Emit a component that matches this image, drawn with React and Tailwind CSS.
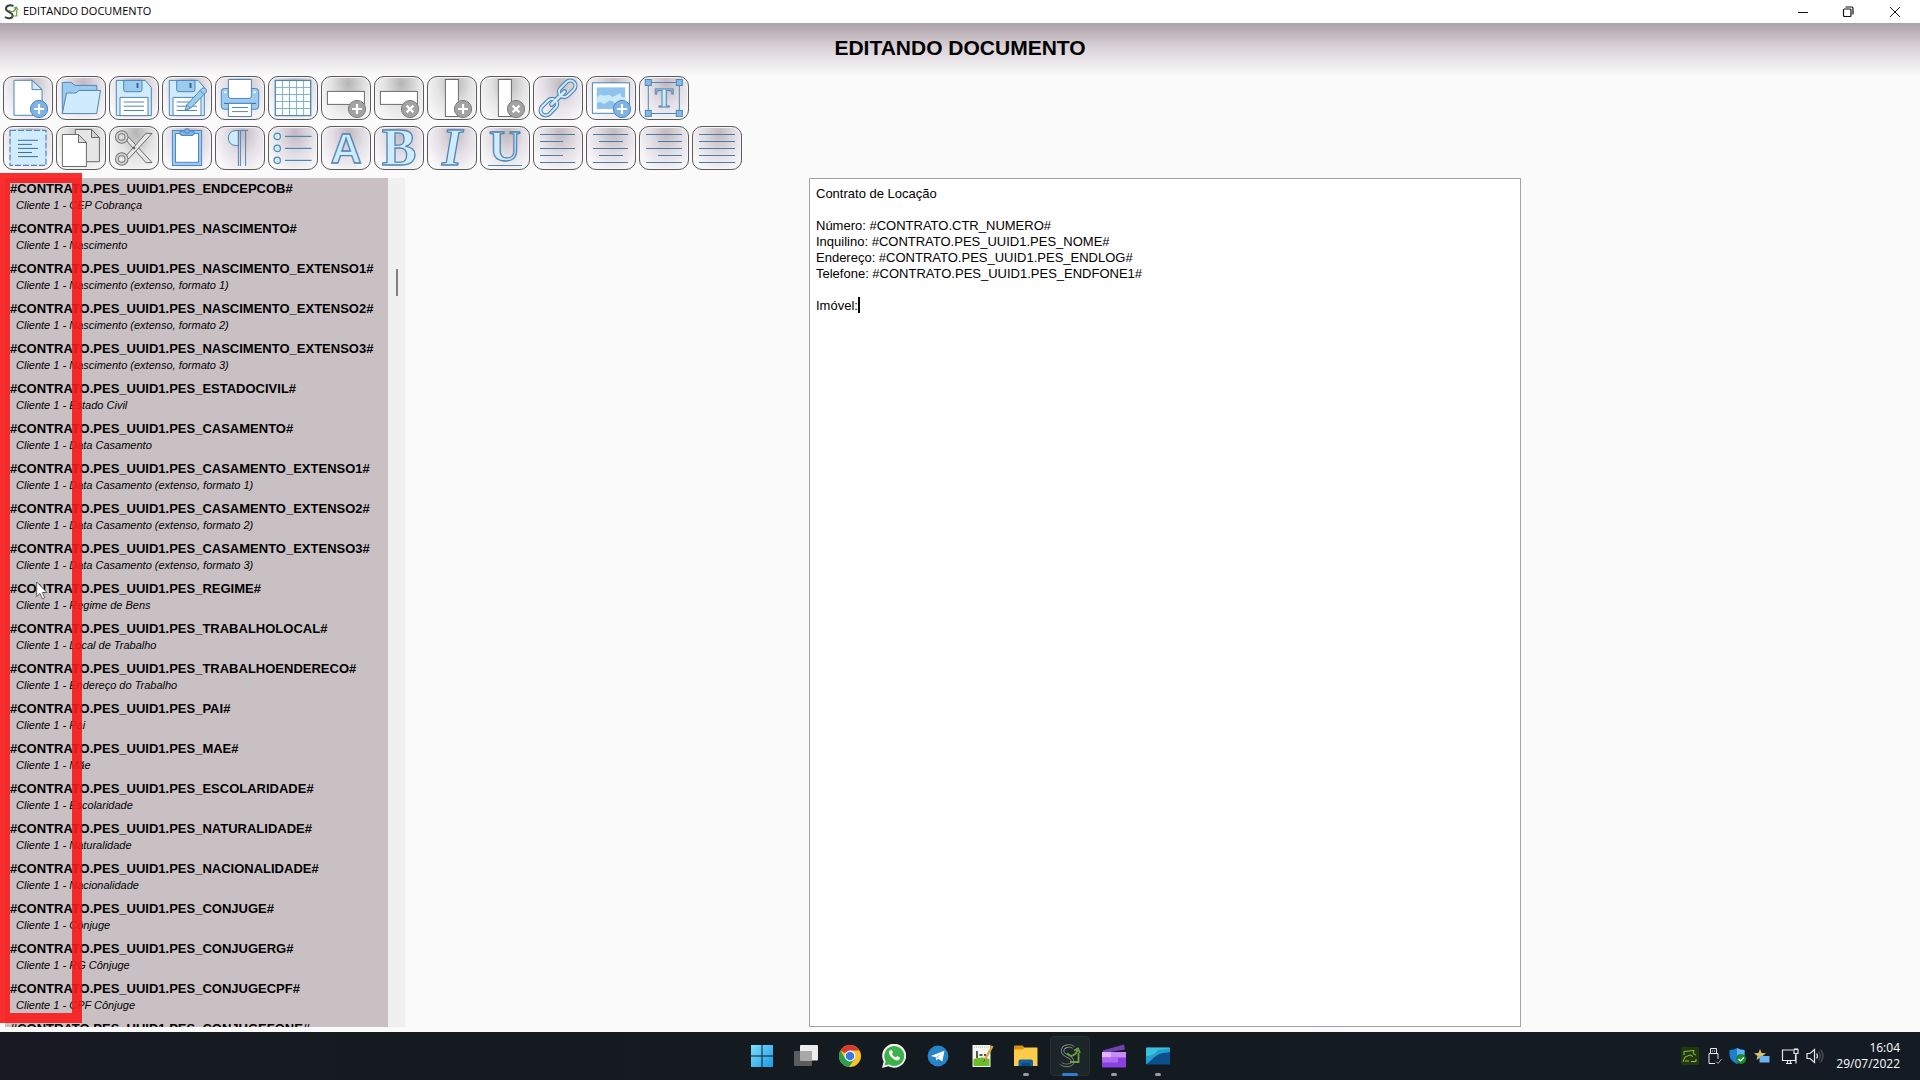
import React, { useState } from "react";

const BLUE = "#4f86b3";
const LIGHT = "#cfebfc";
const MID = "#9ccbf0";
const GRAY = "#6b6b6b";

const fields = [
  ["ENDCEPCOB", "CEP Cobrança"],
  ["NASCIMENTO", "Nascimento"],
  ["NASCIMENTO_EXTENSO1", "Nascimento (extenso, formato 1)"],
  ["NASCIMENTO_EXTENSO2", "Nascimento (extenso, formato 2)"],
  ["NASCIMENTO_EXTENSO3", "Nascimento (extenso, formato 3)"],
  ["ESTADOCIVIL", "Estado Civil"],
  ["CASAMENTO", "Data Casamento"],
  ["CASAMENTO_EXTENSO1", "Data Casamento (extenso, formato 1)"],
  ["CASAMENTO_EXTENSO2", "Data Casamento (extenso, formato 2)"],
  ["CASAMENTO_EXTENSO3", "Data Casamento (extenso, formato 3)"],
  ["REGIME", "Regime de Bens"],
  ["TRABALHOLOCAL", "Local de Trabalho"],
  ["TRABALHOENDERECO", "Endereço do Trabalho"],
  ["PAI", "Pai"],
  ["MAE", "Mãe"],
  ["ESCOLARIDADE", "Escolaridade"],
  ["NATURALIDADE", "Naturalidade"],
  ["NACIONALIDADE", "Nacionalidade"],
  ["CONJUGE", "Cônjuge"],
  ["CONJUGERG", "RG Cônjuge"],
  ["CONJUGECPF", "CPF Cônjuge"],
  ["CONJUGEFONE", "Telefone Cônjuge"],
];

const initialText = `Contrato de Locação

Número: #CONTRATO.CTR_NUMERO#
Inquilino: #CONTRATO.PES_UUID1.PES_NOME#
Endereço: #CONTRATO.PES_UUID1.PES_ENDLOG#
Telefone: #CONTRATO.PES_UUID1.PES_ENDFONE1#

Imóvel:`;

const Badge = ({ remove, gray }) => (
  <>
    <circle
      cx="36"
      cy="33"
      r="8.6"
      fill={gray ? "#a3a3a3" : "#7fb2e5"}
      stroke={gray ? "#7d7d7d" : "#4a86c0"}
    />
    <path
      d={remove ? "M32.6 29.6l6.8 6.8M39.4 29.6l-6.8 6.8" : "M36 28v10M31 33h10"}
      stroke="#fff"
      strokeWidth="2.2"
    />
  </>
);

const Floppy = () => (
  <g stroke={BLUE}>
    <path d="M7.3 4.4H36L42.3 11.3V39.6H7.3Z" fill={LIGHT} />
    <path d="M14.7 4.4H33V13.5Q33 15.7 31 15.7H16.7Q14.7 15.7 14.7 13.5Z" fill={MID} />
    <path d="M28.5 7v5" stroke="#356a96" strokeWidth="2" />
    <path d="M11 39.6V21.4H39V39.6Z" fill="#fff" />
    <path d="M14.7 26H35M14.7 30.2H35M14.7 34.5H35" />
  </g>
);

const Lines = ({ rows }) => (
  <path
    d={rows.map(([a, b], i) => `M${a} ${8.5 + i * 7}H${b}`).join("")}
    stroke="#4c7ba3"
    strokeWidth="1.2"
  />
);

const Letter = ({ children, x = 25, y = 38, size = 50, ...rest }) => (
  <text
    x={x}
    y={y}
    fontSize={size}
    textAnchor="middle"
    fontFamily="'Liberation Serif', serif"
    fill={LIGHT}
    stroke={BLUE}
    strokeWidth="1.3"
    {...rest}
  >
    {children}
  </text>
);

const topTools = [
  {
    label: "Novo",
    icon: (
      <>
        <g stroke={BLUE} fill="#fff">
          <path d="M11 4.3H29L39 13.6V39.3H11Z" />
          <path d="M29 4.3V13.6H39Z" fill={LIGHT} />
        </g>
        <Badge />
      </>
    ),
  },
  {
    label: "Abrir",
    icon: (
      <g stroke={BLUE}>
        <path d="M6.3 37.6V6.4H15L19 9.4H40.8V30Z" fill={MID} />
        <path d="M6.3 37.6L10.5 17H20L23 14.4H44.5L40.7 37.6Z" fill={LIGHT} />
      </g>
    ),
  },
  { label: "Salvar", icon: <Floppy /> },
  {
    label: "Salvar como",
    icon: (
      <>
        <Floppy />
        <path d="M23 34.3L25 28.6 40 12.4Q42 11 43.6 12.6T44 16.4L28.6 32.2Z" fill={MID} stroke={BLUE} />
        <path d="M25 28.6L28.6 32.2M38 14.5L42 18.6" stroke={BLUE} />
      </>
    ),
  },
  {
    label: "Imprimir",
    icon: (
      <g stroke={BLUE}>
        <rect x="6.3" y="12.5" width="37.4" height="20.8" rx="3" fill={MID} />
        <path d="M13.4 3.5H36.4V20Q36.4 22.4 34 22.4H15.8Q13.4 22.4 13.4 20Z" fill="#fff" />
        <path d="M9 27.4H41" stroke="#356a96" />
        <path d="M13.4 27.4H36.4V40.5H13.4Z" fill="#fff" />
        <path d="M17 31.5H33M17 35.6H33" />
        <path d="M9 16.3h2.4M38.5 16.3h2.4" stroke="#fff" strokeWidth="1.4" />
      </g>
    ),
  },
  {
    label: "Tabela",
    icon: (
      <>
        <rect x="7.3" y="4.4" width="35.4" height="35.2" fill="#fff" stroke={BLUE} strokeWidth="1.3" />
        <path
          d="M14.4 5V39M21.5 5V39M28.6 5V39M35.6 5V39M8 11.4H42M8 18.5H42M8 25.5H42M8 32.5H42"
          stroke="#7eb0cf"
        />
      </>
    ),
  },
  {
    label: "Inserir linha",
    gray: true,
    icon: (
      <>
        <rect x="6.4" y="15.4" width="37" height="13" fill="#fff" stroke={GRAY} />
        <Badge gray />
      </>
    ),
  },
  {
    label: "Remover linha",
    gray: true,
    icon: (
      <>
        <rect x="6.4" y="15.4" width="37" height="13" fill="#fff" stroke={GRAY} />
        <Badge gray remove />
      </>
    ),
  },
  {
    label: "Inserir coluna",
    gray: true,
    icon: (
      <>
        <rect x="18.4" y="3.5" width="13" height="37" fill="#fff" stroke={GRAY} />
        <Badge gray />
      </>
    ),
  },
  {
    label: "Remover coluna",
    gray: true,
    icon: (
      <>
        <rect x="18.4" y="3.5" width="13" height="37" fill="#fff" stroke={GRAY} />
        <Badge gray remove />
      </>
    ),
  },
  {
    label: "Link",
    icon: (
      <g transform="rotate(-45 25 22)" fill="none">
        {[BLUE, LIGHT].map((c) => (
          <g key={c} stroke={c} strokeWidth={c === BLUE ? 4.2 : 2}>
            <rect x="2.5" y="16.8" width="19" height="10.4" rx="5.2" />
            <rect x="28.5" y="16.8" width="19" height="10.4" rx="5.2" />
            <path d="M16 22H34" strokeLinecap="round" strokeWidth={c === BLUE ? 5 : 2.8} />
          </g>
        ))}
      </g>
    ),
  },
  {
    label: "Imagem",
    icon: (
      <>
        <rect x="6.4" y="6.8" width="37" height="30.5" fill="#fff" stroke={BLUE} />
        <rect x="10.8" y="11.4" width="28.4" height="21.6" fill="#8fc3ee" />
        <path d="M10.8 22q2-4 5-3t5 0 4 1 6-1 4 0 4.400 2v7q-3-3-6-1t-6-1-6 0-5 1-5.400 0z" fill="#c9e9fb" />
        <Badge />
      </>
    ),
  },
  {
    label: "Caixa de texto",
    icon: (
      <>
        <rect x="9.3" y="6.5" width="31" height="31" fill="none" stroke={BLUE} />
        {[
          [6.3, 3.5],
          [37.3, 3.5],
          [6.3, 34.4],
          [37.3, 34.4],
        ].map(([x, y]) => (
          <rect key={`${x}-${y}`} x={x} y={y} width="6" height="6" fill="#83bbe8" stroke={BLUE} />
        ))}
        <Letter y={31} size={28} fontWeight="bold" strokeWidth="1">
          T
        </Letter>
      </>
    ),
  },
];

const bottomTools = [
  {
    label: "Selecionar tudo",
    icon: (
      <>
        <rect x="7" y="4.4" width="36" height="35" fill={LIGHT} stroke={BLUE} strokeWidth="1.2" strokeDasharray="6 2" />
        <path d="M15 14.3H35M15 18.4H29M15 22.4H35M15 26.5H29M15 30.6H35" stroke="#3f7096" />
      </>
    ),
  },
  {
    label: "Copiar",
    gray: true,
    icon: (
      <g stroke={GRAY}>
        <path d="M19.4 3.5H35.5L43.4 11.5V35.7H19.4Z" fill="#e6e6e6" />
        <path d="M35.5 3.5V11.5H43.4Z" fill="#d0d0d0" />
        <path d="M6.4 8.5H22.5L30.4 16.5V40.5H6.4Z" fill="#fff" />
        <path d="M22.5 8.5V16.5H30.4Z" fill="#ddd" />
      </g>
    ),
  },
  {
    label: "Recortar",
    gray: true,
    icon: (
      <g stroke={GRAY} fill="#e6e6e6">
        <path d="M16.5 13.5L37 36.7 43 36.5 19.5 11Z" />
        <path d="M16.5 30.5L37 7.3 43 7.5 19.5 33Z" />
        <g fill="none">
          <circle cx="12.7" cy="11" r="4.8" stroke="#777" strokeWidth="4" />
          <circle cx="12.7" cy="33" r="4.8" stroke="#777" strokeWidth="4" />
          <circle cx="12.7" cy="11" r="4.8" stroke="#d2d2d2" strokeWidth="2" />
          <circle cx="12.7" cy="33" r="4.8" stroke="#d2d2d2" strokeWidth="2" />
        </g>
        <circle cx="25" cy="22" r="1" fill="#555" />
      </g>
    ),
  },
  {
    label: "Colar",
    icon: (
      <g stroke="#4f86bd">
        <rect x="10.4" y="4.5" width="29.2" height="35" fill="#9ccaf0" />
        <rect x="13.5" y="7.5" width="23" height="28.8" fill="#fff" />
        <path d="M18 5H32V7.5Q32 9.5 30 9.5H20Q18 9.5 18 7.5Z" fill="#7fb2e5" />
        <circle cx="25" cy="5" r="2.4" fill="#7fb2e5" />
      </g>
    ),
  },
  {
    label: "Parágrafo",
    icon: (
      <g stroke={BLUE}>
        <path d="M23.4 4.5H21Q13.4 5 13.4 12T21 19.6H23.4Z" fill={LIGHT} />
        <path d="M23.4 40V4.5H25.4V40M30.6 40V4.5H23.4M30.6 4.5H33" fill="none" />
      </g>
    ),
  },
  {
    label: "Lista",
    icon: (
      <g stroke={BLUE} strokeWidth="1.2">
        {[10.4, 22.4, 34.4].map((y) => (
          <g key={y}>
            <circle cx="9.2" cy={y} r="3.2" fill={LIGHT} />
            <path d={`M17 ${y}H43.6`} />
          </g>
        ))}
      </g>
    ),
  },
  {
    label: "Fonte",
    icon: (
      <Letter y={37} size={43} fontFamily="'Liberation Sans', sans-serif" fontWeight="bold">
        A
      </Letter>
    ),
  },
  { label: "Negrito", icon: <Letter y={39} size={52} fontWeight="bold">B</Letter> },
  { label: "Itálico", icon: <Letter y={39} size={52} fontWeight="bold" fontStyle="italic">I</Letter> },
  {
    label: "Sublinhado",
    icon: (
      <>
        <Letter y={35} size={44} fontWeight="bold">
          U
        </Letter>
        <path d="M8 39.5H42" stroke={BLUE} strokeWidth="1.2" />
      </>
    ),
  },
  { label: "Alinhar à esquerda", icon: <Lines rows={[[7, 42], [7, 30], [7, 42], [7, 30], [7, 42]]} /> },
  { label: "Centralizar", icon: <Lines rows={[[7, 42], [13, 37], [7, 42], [13, 37], [7, 42]]} /> },
  { label: "Alinhar à direita", icon: <Lines rows={[[7, 43], [19, 43], [7, 43], [19, 43], [7, 43]]} /> },
  { label: "Justificar", icon: <Lines rows={[[7, 43], [7, 43], [7, 43], [7, 43], [7, 43]]} /> },
];

const ToolButton = ({ label, icon, gray }) => (
  <button
    type="button"
    aria-label={label}
    className={`w-[50px] h-11 rounded-[10px] border border-[#5c5a5c] shadow-[inset_0_0_0_1px_#f5f5f5] ${
      gray
        ? "bg-[radial-gradient(ellipse_at_55%_15%,#b4b4b4,#e3e3e3_45%,#f8f8f8_85%)]"
        : "bg-[radial-gradient(ellipse_at_55%_15%,#c2b8c0,#e4e0e6_45%,#faf9fb_85%)]"
    }`}
  >
    <svg viewBox="1 1 48 42" className="w-full h-full overflow-visible" fill="none">
      {icon}
    </svg>
  </button>
);

const Logo = ({ className, dark }) => (
  <svg viewBox="0 0 24 24" className={className} fill="none">
    <path
      d="M15.5 3.5C12 .5 4.5 2 4.5 7S14 12 14.5 17 7 22.5 3 19.5"
      stroke={dark ? "#8a8f8c" : "#3b3f3b"}
      strokeWidth={dark ? 3.4 : 3}
    />
    {dark && (
      <path
        d="M15.5 3.5C12 .5 4.5 2 4.5 7S14 12 14.5 17 7 22.5 3 19.5"
        stroke="#1c2526"
        strokeWidth="1.8"
      />
    )}
    <path d="M9 9.5L13 12Q18 11 19.5 6M16 6.5L20 4.5 22 9M20.5 9V18H12" stroke="#6aa043" strokeWidth="1.8" />
  </svg>
);

const taskIcons = [
  {
    label: "Iniciar",
    icon: (
      <g fill="url(#win)">
        <path d="M1 1h10.5v10.5H1zM12.5 1H23v10.5H12.5zM1 12.5h10.5V23H1zM12.5 12.5H23V23H12.5z" />
        <defs>
          <linearGradient id="win" x1="0" y1="0" x2="1" y2="1">
            <stop stopColor="#7fe0fb" />
            <stop offset="1" stopColor="#1899e6" />
          </linearGradient>
        </defs>
      </g>
    ),
  },
  {
    label: "Visão de tarefas",
    icon: (
      <>
        <rect x="0" y="7" width="18" height="15" rx="1" fill="#5a5c5e" />
        <rect x="6" y="1" width="18" height="15.5" rx="1" fill="#ececec" />
        <rect x="6" y="7" width="12" height="9.5" fill="#a8a8a8" />
      </>
    ),
  },
  {
    label: "Chrome",
    icon: (
      <>
        <circle cx="12" cy="12" r="11" fill="#f9c32b" />
        <path d="M12 12L2.5 6.5A11 11 0 0 1 21.5 6.5H12Z" fill="#d93a2f" />
        <path d="M2.5 6.5A11 11 0 0 0 11 23L16.7 14.7 7.3 14.7Z" fill="#2f9e4f" />
        <circle cx="12" cy="12" r="5.4" fill="#fff" />
        <circle cx="12" cy="12" r="4.3" fill="#3b78e7" />
      </>
    ),
  },
  {
    label: "WhatsApp",
    icon: (
      <>
        <path d="M0 24L1.7 17.6A12 12 0 1 1 6.3 22.2Z" fill="#f4f4f4" />
        <path d="M2.5 21.5L3.7 17.2A10 10 0 1 1 7 20.5Z" fill="#3cb04a" />
        <path d="M8.3 6.3c-2 1-2 4 1.5 7.2s6.7 4 8 1.2c.3-.8 0-1.3-.4-1.5l-2-1c-.7-.3-1.3 1.2-1.900 1.100-1-.2-3.400-2.400-3.500-3.300 0-.5 1-1 .8-1.700l-.9-2.100z" fill="#fff" />
      </>
    ),
  },
  {
    label: "Telegram",
    icon: (
      <>
        <circle cx="12" cy="12" r="10.4" fill="#2684c9" />
        <path d="M4.8 12L18.5 6.8 16.3 17.5 12.3 14.7 10.2 16.5 9.8 13.2Z" fill="#fff" />
        <path d="M9.8 13.2L16 8.8 11 14.2Z" fill="#9cc6e6" />
      </>
    ),
  },
  {
    label: "Notepad++",
    icon: (
      <>
        <path d="M2.5 1H20.5V23H2.5Z" fill="#f3f5ee" />
        <path d="M3.5 15Q12 12 19.5 15V22H3.5Z" fill="#6bbd2c" />
        <path d="M7 7v7M9.5 11h3M14 11h2" stroke="#222" strokeWidth="1.5" />
        <path d="M4 3h15" stroke="#aaa" strokeDasharray="1 1" />
        <path d="M22.5 2L14 17" stroke="#d9a73a" strokeWidth="2.4" />
        <path d="M15 15.2L13.5 18" stroke="#444" />
      </>
    ),
  },
  {
    label: "Explorador",
    dot: true,
    icon: (
      <>
        <path d="M0 2.5Q0 1.5 1 1.5H8.5L11 4V7H0Z" fill="#d99312" />
        <path d="M0 5.5H8.5L11 3.5H23.5V22H0Z" fill="#fbcb4a" />
        <path d="M4.5 22V17.5Q4.5 15.5 6.5 15.5H17Q19 15.5 19 17.5V22Z" fill="#135f9f" />
        <path d="M7.5 22V19H16V22Z" fill="#0b4a82" />
      </>
    ),
  },
  { label: "Editor", active: true },
  {
    label: "Clipchamp",
    dot: true,
    icon: (
      <>
        <path d="M.5 6.5L22 .5 23 5.500 2 9Z" fill="#7440b8" />
        <rect x="0" y="8" width="24" height="15.5" rx="1" fill="#8b3fe0" />
        <rect x="0" y="8" width="24" height="5.5" fill="#c58cf5" />
        <path d="M0 8H9V13.5H0Z" fill="#e2b2fb" />
        <path d="M0 13.5H16V18.5H0Z" fill="#b06bf0" />
      </>
    ),
  },
  {
    label: "Área de trabalho",
    dot: true,
    icon: (
      <>
        <rect x="0" y="3.5" width="24" height="17" rx="1" fill="#0b4f8c" />
        <path d="M0 4.5Q0 3.5 1 3.5H23Q24 3.5 24 4.5V8Q13 8 7 14T0 20Z" fill="#38c3de" />
        <path d="M0 12Q8 12 12 6L24 4.5V8Q13 8 7 14T0 20Z" fill="#1b8fc8" opacity=".7" />
      </>
    ),
  },
];

const TaskButton = ({ label, icon, active, dot }) => (
  <button
    type="button"
    aria-label={label}
    className="w-11 h-12 flex items-center justify-center relative"
  >
    {active ? (
      <span className="w-10 h-10 rounded flex items-center justify-center bg-[#1c2629] border border-[#263033]">
        <Logo dark className="w-6 h-6" />
      </span>
    ) : (
      <svg viewBox="0 0 24 24" className="w-6 h-6">
        {icon}
      </svg>
    )}
    {active && <span className="absolute bottom-1 w-4 h-[3px] rounded-full bg-[#2f7fd0]"></span>}
    {dot && <span className="absolute bottom-1 w-1.5 h-[3px] rounded-full bg-[#9a9c9e]"></span>}
  </button>
);

const Tray = () => (
  <div className="flex items-center gap-[7px] text-white">
    <svg viewBox="0 0 18 18" className="w-[18px] h-[18px]" fill="none">
      <rect width="18" height="18" fill="#22380f" />
      <path d="M3 8V4.500L13 3.500 12 6.500 15 8M2 15L4 10 9 8 12 9.500M4 14H8M10 14.500H15V12" stroke="#8fc04a" />
    </svg>
    <svg viewBox="0 0 16 18" className="w-4 h-[18px]" fill="none" stroke="#e8e8e8">
      <path d="M4.5 6V1.5H10.5V6M3 6.500H12V12M3 6.500V16.500H9M6.500 3.500v1M8.500 3.500v1" />
      <path d="M10 14.5L12 16.5 15.5 12" stroke="#aaa" />
    </svg>
    <svg viewBox="0 0 18 18" className="w-[18px] h-[18px]" fill="none">
      <path d="M8 1Q11 3 15.5 3V8Q15 14 8 17 1 14 .5 8V3Q5 3 8 1Z" fill="#1e7fd0" />
      <path d="M8 1Q11 3 15.5 3V8H8Z" fill="#5db4f0" />
      <circle cx="12" cy="12" r="5" fill="#1c8a32" />
      <path d="M9.5 12l2 2 3.3-3.5" stroke="#fff" strokeWidth="1.2" />
    </svg>
    <svg viewBox="0 0 16 16" className="w-4 h-4">
      <path d="M6 1L7.5 5 12 5.3 8.5 8 9.5 12 6 9.7 2.5 12 3.5 8 0 5.3 4.5 5Z" fill="#d9bf6b" />
      <rect x="5.5" y="8" width="10" height="6.5" fill="#6cb4ee" />
    </svg>
    <svg viewBox="0 0 18 18" className="w-[18px] h-[18px] ml-1" fill="none" stroke="#e8e8e8" strokeWidth="1.2">
      <path d="M12 3H1.5V13.5H14.5V8M5 16.5H11M6.5 14v2M9.5 14v2" />
      <path d="M13 2.5H17V6.5H13ZM15 6.5V16.5M14 1v1.5M16 1v1.5" />
    </svg>
    <svg viewBox="0 0 18 18" className="w-[18px] h-[18px]" fill="none" stroke="#e8e8e8" strokeWidth="1.2">
      <path d="M1 6.5H4L8.5 2.5V15.5L4 11.5H1Z" />
      <path d="M10.5 6.5Q12.5 9 10.5 11.5" />
      <path d="M12.5 4.5Q16 9 12.5 13.5M14.5 2.5Q19.5 9 14.5 15.5" stroke="#555b60" />
    </svg>
  </div>
);

export default function App() {
  const [text, setText] = useState(initialText);

  return (
    <div className="h-screen flex flex-col bg-[#fafafa] text-black font-['Liberation_Sans',sans-serif] overflow-hidden">
      <div className="h-[23px] shrink-0 bg-white flex items-center justify-between">
        <div className="flex items-center gap-1 pl-[3px] font-['Open_Sans',sans-serif] text-[11px]">
          <Logo className="w-4 h-4" />
          <span>EDITANDO DOCUMENTO</span>
        </div>
        <div className="flex">
          <button type="button" aria-label="Minimizar" className="w-[45px] h-5 flex items-center justify-center">
            <svg viewBox="0 0 12 12" className="w-3 h-3" stroke="#111">
              <path d="M1 6.5H11" />
            </svg>
          </button>
          <button type="button" aria-label="Restaurar" className="w-[45px] h-5 flex items-center justify-center">
            <svg viewBox="0 0 12 12" className="w-3 h-3" stroke="#111" fill="none" strokeWidth="1.2">
              <rect x="1.5" y="3" width="7.5" height="7.5" rx="1" />
              <path d="M3.5 1H9.5Q11 1 11 2.5V8.5" />
            </svg>
          </button>
          <button type="button" aria-label="Fechar" className="w-[50px] h-5 flex items-center justify-center">
            <svg viewBox="0 0 12 12" className="w-3 h-3" stroke="#111">
              <path d="M1 1L11 11M11 1L1 11" />
            </svg>
          </button>
        </div>
      </div>

      <header className="h-[53px] shrink-0 flex items-center justify-center bg-linear-to-b from-[#aba1a6] via-[#d9d1d7] via-45% to-[#fafafa]">
        <h1 className="text-[21px] leading-6 font-bold pb-1">EDITANDO DOCUMENTO</h1>
      </header>

      <div className="flex flex-col gap-1.5 pl-[3px] pb-2">
        <div className="flex gap-[3px]">
          {topTools.map((tool) => (
            <ToolButton key={tool.label} {...tool} />
          ))}
        </div>
        <div className="flex gap-[3px]">
          {bottomTools.map((tool) => (
            <ToolButton key={tool.label} {...tool} />
          ))}
        </div>
      </div>

      <main className="flex-1 min-h-0 flex pb-[5px] relative">
        <div className="w-[405px] shrink-0 flex pl-[5px]">
          <ul className="flex-1 overflow-hidden bg-[#c9c0c4]">
            {fields.map(([name, description]) => (
              <li key={name} className="h-10">
                <button type="button" className="block w-full text-left pl-[5px] pt-px whitespace-nowrap">
                  <span className="block text-[13px] leading-5 font-bold">
                    #CONTRATO.PES_UUID1.PES_{name}#
                  </span>
                  <span className="block text-[11px] leading-3 italic pl-[6px]">
                    Cliente 1 - {description}
                  </span>
                </button>
              </li>
            ))}
          </ul>
          <div className="w-[17px] bg-[#f0f0f0] flex justify-center pt-[91px]">
            <div className="w-[2px] h-[27px] bg-[#808080]"></div>
          </div>
        </div>

        <div className="flex-1 flex justify-center pl-[5px]">
          <div className="relative w-[712px] max-w-full flex">
            <textarea
              aria-label="Documento"
              spellCheck={false}
              value={text}
              onChange={(e) => setText(e.target.value)}
              className="w-full resize-none bg-white border border-[#a3a3a3] px-1.5 py-[7px] text-[13px] leading-4 outline-none"
            />
            <span className="absolute left-[49px] top-[119px] w-[2px] h-4 bg-black"></span>
          </div>
        </div>

        {/* highlight over the tag list */}
        <div className="absolute left-0 -top-[5px] bottom-[9px] w-[82px] border-[10px] border-[#f81818]/90 pointer-events-none"></div>
        <svg
          viewBox="0 0 12 19"
          className="absolute left-9 top-[403px] w-3 h-[19px] pointer-events-none"
        >
          <path
            d="M.7 1V15.5L4 12.4 6.3 17.8 8.7 16.8 6.4 11.5H11Z"
            fill="#fff"
            stroke="#444"
            strokeWidth=".8"
          />
        </svg>
      </main>

      <footer className="h-12 shrink-0 grid grid-cols-[1fr_auto_1fr] bg-linear-to-r from-[#171a22] via-[#131b20] to-[#151b24] text-white">
        <div></div>
        <div className="flex">
          {taskIcons.map((t) => (
            <TaskButton key={t.label} {...t} />
          ))}
        </div>
        <div className="flex items-center justify-end gap-3 pr-5">
          <Tray />
          <div className="font-['Open_Sans',sans-serif] text-xs text-right">
            <div>16:04</div>
            <div>29/07/2022</div>
          </div>
        </div>
      </footer>
    </div>
  );
}
